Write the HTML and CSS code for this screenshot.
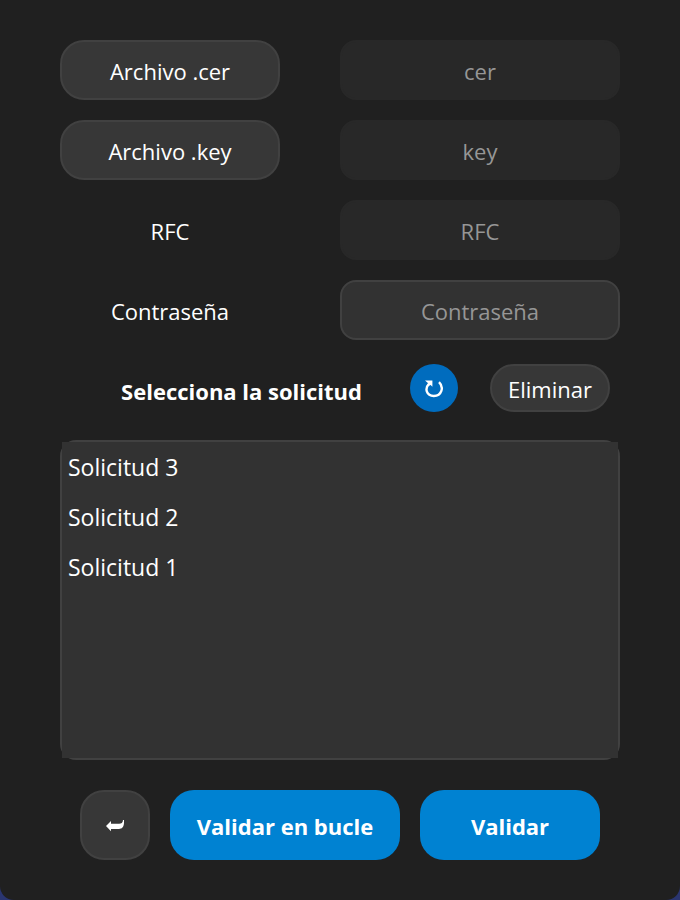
FILE: index.html
```html
<!DOCTYPE html>
<html lang="es">
<head>
  <meta charset="UTF-8" />
  <meta name="viewport" content="width=device-width, initial-scale=1.0"/>
  <title>Validar solicitud</title>
  <link rel="stylesheet" href="styles.css">
</head>
<body>
  <main class="window">
    <form id="requestForm">
      <div class="fields">
        <button type="button" class="btn">Archivo .cer</button>
        <input type="text" name="cer" placeholder="cer" aria-label="Archivo .cer" disabled />

        <button type="button" class="btn">Archivo .key</button>
        <input type="text" name="key" placeholder="key" aria-label="Archivo .key" disabled />

        <label for="rfc">RFC</label>
        <input type="text" id="rfc" name="rfc" placeholder="RFC" disabled />

        <label for="password">Contraseña</label>
        <input type="password" id="password" name="password" placeholder="Contraseña" />
      </div>

      <div class="toolbar">
        <label class="title" for="requests">Selecciona la solicitud</label>
        <button type="button" class="btn-refresh" aria-label="Actualizar">
          <svg width="20" height="20" viewBox="0 0 20 20" aria-hidden="true">
            <path d="M4.800 5.200C.6 9.500 2.300 17 9.800 17C17.800 17 20.200 8 15 3.200" fill="none" stroke="#fff" stroke-width="2.400"/>
            <path d="M1 1.600H8.400V7.800L6.600 6L4.800 6.800L3.400 5.400L4.200 4.200L1 1.600Z" fill="#fff"/>
          </svg>
        </button>
        <button type="button" class="btn btn-delete">Eliminar</button>
      </div>

      <div class="list-frame">
        <select id="requests" name="requests" size="6">
          <option value="3">Solicitud 3</option>
          <option value="2">Solicitud 2</option>
          <option value="1">Solicitud 1</option>
        </select>
      </div>

      <div class="actions">
        <button type="button" class="btn btn-back" aria-label="Regresar">
          <svg width="18" height="12" viewBox="0 0 18 12" aria-hidden="true">
            <path d="M0 6L5 1V3.800H13C15.500 3.800 16.800 2.800 17 0H18C18.400 6.500 16.500 9 13 9H5V11.200Z" fill="#fff"/>
          </svg>
        </button>
        <button type="button" class="btn-primary btn-loop">Validar en bucle</button>
        <button type="submit" class="btn-primary">Validar</button>
      </div>
    </form>
  </main>
</body>
</html>
```
FILE: styles.css
```css
* {
  box-sizing: border-box;
}
body {
  margin: 0;
  background-color: #2a3570;
  color: #ffffff;
  font-family: "Segoe UI", "Open Sans", "Noto Sans", sans-serif;
  font-size: 22px;
  line-height: 30px;
}
.window {
  min-height: 100vh;
  padding: 40px 60px;
  background-color: #202020;
  border-radius: 0 0 14px 14px;
}
button, input, select {
  margin: 0;
  font: inherit;
  color: inherit;
}
button {
  padding: 2px 0 0;
  border: none;
  cursor: pointer;
}
.fields {
  display: grid;
  grid-template-columns: 11fr 14fr;
  grid-auto-rows: 60px;
  gap: 20px 60px;
}
.fields label {
  align-self: center;
  padding-top: 2px;
  text-align: center;
}
.btn {
  background-color: #373737;
  border: 2px solid #414141;
  border-radius: 24px;
}
input {
  width: 100%;
  min-width: 0;
  padding: 2px 12px 0;
  background-color: #323232;
  border: 2px solid #414141;
  border-radius: 16px;
  text-align: center;
}
input:disabled {
  background-color: #282828;
  border-color: #282828;
}
input::placeholder {
  color: #969696;
  opacity: 1;
}
.toolbar {
  display: flex;
  justify-content: flex-end;
  align-items: center;
  gap: 32px;
  margin: 24px 0 28px;
  padding-right: 10px;
}
.title {
  padding: 6px 16px 0 0;
  font-weight: 700;
}
.btn-refresh {
  display: flex;
  align-items: center;
  justify-content: center;
  width: 48px;
  height: 48px;
  background-color: #006cbe;
  border-radius: 50%;
}
.btn-delete {
  width: 120px;
  height: 48px;
}
/* the list keeps square corners over the rounded frame */
.list-frame {
  border: 2px solid #414141;
  border-radius: 16px;
}
select {
  display: block;
  width: 100%;
  height: 316px;
  padding: 0;
  background-color: #323232;
  border: none;
  border-radius: 0;
  outline: none;
  font-size: 23px;
}
option {
  padding: 9px 6px;
}
.actions {
  display: flex;
  justify-content: center;
  gap: 20px;
  margin-top: 30px;
}
.actions button {
  height: 70px;
}
.btn-back {
  display: flex;
  align-items: center;
  justify-content: center;
  width: 70px;
}
.btn-primary {
  width: 180px;
  background-color: #0082d2;
  border-radius: 24px;
  font-weight: 700;
}
.btn-loop {
  width: 230px;
}
```
